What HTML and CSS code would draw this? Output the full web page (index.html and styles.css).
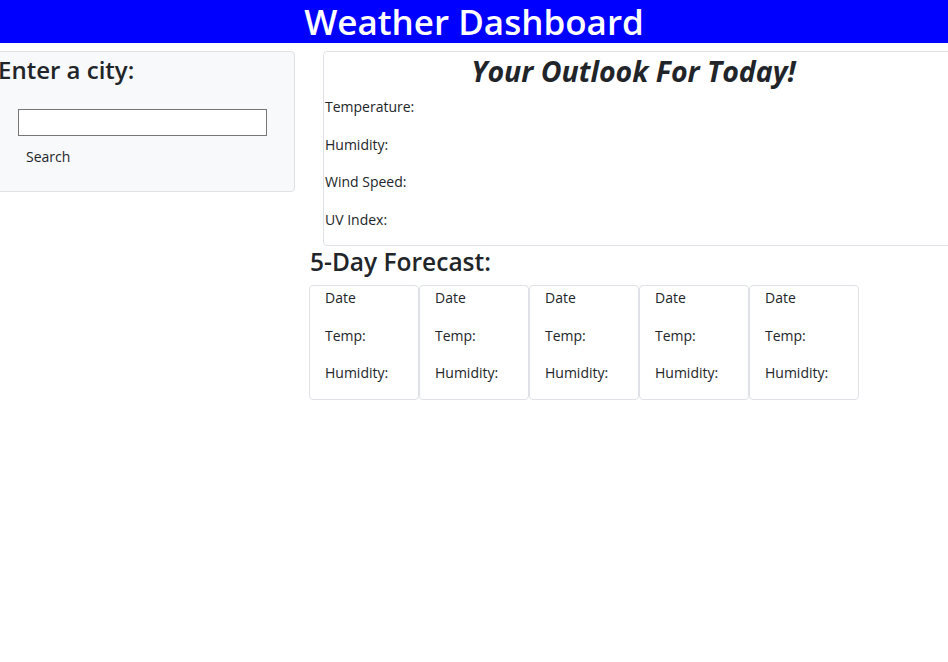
FILE: index.html
```html
<!DOCTYPE html>
<html lang="en">
<head>
<meta charset="utf-8">
<title>Weather Dashboard</title>
<link rel="stylesheet" href="styles.css">
</head>
<body>
<header class="topbar">
  <h1 class="topbar-title">Weather Dashboard</h1>
</header>
<main class="layout">
  <aside class="side">
    <section class="search-card">
      <h3 class="search-title">Enter a city:</h3>
      <form class="search-form">
        <input class="search-input" type="text">
        <button class="search-btn" type="button">Search</button>
      </form>
    </section>
  </aside>
  <section class="content">
    <div class="today-card">
      <h2 class="today-title">Your Outlook For Today!</h2>
      <p class="stat">Temperature:</p>
      <p class="stat">Humidity:</p>
      <p class="stat">Wind Speed:</p>
      <p class="stat">UV Index:</p>
    </div>
    <h3 class="forecast-title">5-Day Forecast:</h3>
    <div class="forecast-row">
      <div class="day-card"><p class="stat">Date</p><p class="stat">Temp:</p><p class="stat">Humidity:</p></div>
      <div class="day-card"><p class="stat">Date</p><p class="stat">Temp:</p><p class="stat">Humidity:</p></div>
      <div class="day-card"><p class="stat">Date</p><p class="stat">Temp:</p><p class="stat">Humidity:</p></div>
      <div class="day-card"><p class="stat">Date</p><p class="stat">Temp:</p><p class="stat">Humidity:</p></div>
      <div class="day-card"><p class="stat">Date</p><p class="stat">Temp:</p><p class="stat">Humidity:</p></div>
    </div>
  </section>
</main>
</body>
</html>
```
FILE: styles.css
```css
html, body {
  margin: 0;
  padding: 0;
  overflow: hidden;
  background: #fff;
}
body {
  font-family: "Open Sans", "Noto Sans", sans-serif;
  font-size: 15px;
  line-height: 1.5;
  color: #212529;
}
.topbar {
  background: #0000ff;
  height: 43px;
  display: flex;
  justify-content: center;
  align-items: center;
}
.topbar-title {
  margin: 0;
  color: #fff;
  font-size: 35px;
  font-weight: 600;
  line-height: 43px;
}
.layout {
  display: flex;
  padding-top: 8px;
}
.side {
  flex: 0 0 auto;
  width: 311px;
  margin-left: -16px;
}
.search-card {
  background: #f8f9fa;
  border: 1px solid #dee2e6;
  border-radius: 4px;
  height: 139px;
  padding-left: 13px;
}
.search-title {
  margin: 0;
  font-size: 24px;
  font-weight: 600;
  line-height: 36px;
}
.search-form {
  display: flex;
  flex-direction: column;
  align-items: flex-start;
  padding-left: 20px;
  padding-top: 21px;
}
.search-input {
  width: 243px;
  height: 23px;
  margin: 0;
  padding: 1px 2px;
  border: 1px solid #767676;
  border-radius: 0;
  background: #fff;
  box-sizing: content-box;
}
.search-btn {
  margin: 6px 0 0 0;
  padding: 4px 8px;
  border: 0;
  background: transparent;
  font-family: inherit;
  font-size: 14px;
  line-height: 22px;
  color: #212529;
}
.content {
  flex: 0 0 auto;
  width: 646px;
  margin-left: 14px;
}
.today-card {
  margin-left: 14px;
  border: 1px solid #dee2e6;
  border-radius: 4px;
  padding-left: 1px;
  padding-top: 1.5px;
}
.today-title {
  margin: 0 0 7.5px 0;
  padding-right: 12px;
  text-align: center;
  font-size: 28.5px;
  font-weight: 700;
  font-style: italic;
  line-height: 35px;
}
.stat {
  margin: 0 0 15px 0;
  font-size: 14px;
  line-height: 22.5px;
}
.today-card .stat:last-child {
  margin-bottom: 13.5px;
}
.forecast-title {
  margin: 0 0 7.5px 1px;
  font-size: 24.5px;
  font-weight: 600;
  line-height: 32px;
}
.forecast-row {
  display: flex;
}
.day-card {
  width: 93px;
  border: 1px solid #dee2e6;
  border-radius: 4px;
  padding-left: 15px;
  padding-top: 1px;
}
.day-card .stat:last-child {
  margin-bottom: 14px;
}
```
